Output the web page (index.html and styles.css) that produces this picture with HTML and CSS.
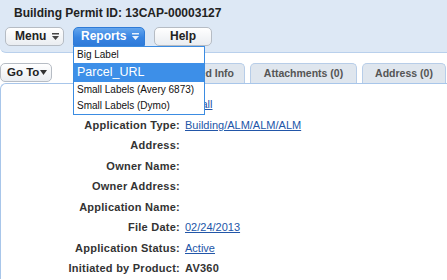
FILE: index.html
```html
<!DOCTYPE html>
<html lang="en">
<head>
  <meta charset="UTF-8" />
  <title>Building Permit 13CAP-00003127</title>
  <link rel="stylesheet" href="styles.css">
</head>
<body>
  <div class="header">
    <h1 class="title">Building Permit ID: 13CAP-00003127</h1>
    <div class="toolbar">
      <button class="btn btn-menu">Menu
        <svg class="menu-icon" width="7" height="7" viewBox="0 0 7 7"><rect width="7" height="1.5"/><path d="M0 3h7L3.5 7z"/></svg>
      </button>
      <div class="reports-wrap">
        <button class="btn btn-blue">Reports
          <svg class="menu-icon" width="7" height="7" viewBox="0 0 7 7"><rect width="7" height="1.5"/><path d="M0 3h7L3.5 7z"/></svg>
        </button>
        <ul class="dropdown">
          <li class="dd-item">Big Label</li>
          <li class="dd-item active">Parcel_URL</li>
          <li class="dd-item">Small Labels (Avery 6873)</li>
          <li class="dd-item">Small Labels (Dymo)</li>
        </ul>
      </div>
      <button class="btn btn-help">Help</button>
    </div>
  </div>

  <div class="nav">
    <button class="btn btn-goto">Go To
      <svg width="7" height="5" viewBox="0 0 7 5"><path d="M0 0h7L3.5 5z"/></svg>
    </button>
    <div class="tabs">
      <div class="tab">Details</div>
      <div class="tab">Extended Info</div>
      <div class="tab tab-attach">Attachments (0)</div>
      <div class="tab tab-address">Address (0)</div>
    </div>
  </div>

  <div class="content">
    <div class="label">Record Type:</div>
    <div class="value"><a href="#">Small</a></div>

    <div class="label">Application Type:</div>
    <div class="value"><a href="#">Building/ALM/ALM/ALM</a></div>

    <div class="label">Address:</div>
    <div class="value"></div>

    <div class="label">Owner Name:</div>
    <div class="value"></div>

    <div class="label">Owner Address:</div>
    <div class="value"></div>

    <div class="label">Application Name:</div>
    <div class="value"></div>

    <div class="label">File Date:</div>
    <div class="value"><a href="#">02/24/2013</a></div>

    <div class="label">Application Status:</div>
    <div class="value"><a href="#">Active</a></div>

    <div class="label">Initiated by Product:</div>
    <div class="value strong">AV360</div>
  </div>
</body>
</html>
```

FILE: styles.css
```css
body {
  margin: 0;
  font-family: "Liberation Sans", Arial, sans-serif;
  background-color: #fff;
  color: #222;
  width: 447px;
  height: 280px;
  overflow: hidden;
}

.header {
  background-color: #dde8f5;
  border-bottom: 1px solid #b9d0ec;
  border-bottom-left-radius: 6px;
  padding: 5px 5px 6px;
}

.title {
  margin: 0 0 6px 9px;
  font-size: 12px;
  font-weight: bold;
  line-height: 16px;
  color: #222;
}

.toolbar {
  display: flex;
  gap: 9px;
}

.btn {
  display: flex;
  align-items: center;
  gap: 6px;
  height: 19px;
  box-sizing: border-box;
  margin: 0;
  padding: 0 0 0 9px;
  border: 1px solid #b6bcc4;
  border-radius: 5px;
  background: linear-gradient(#fff, #eaedf1);
  font: bold 12px/17px "Liberation Sans", Arial, sans-serif;
  color: #222;
}

.btn-menu {
  width: 59px;
}

.menu-icon {
  fill: #444;
}

.btn-blue {
  width: 72px;
  padding-left: 7px;
  border-color: #2f7bd6;
  border-radius: 5px 5px 0 0;
  background: linear-gradient(#64a6ee, #3784e2 55%, #2f7bda);
  color: #fff;
}

.btn-blue .menu-icon {
  fill: #e8f1fc;
}

.btn-help {
  width: 58px;
  justify-content: center;
  padding: 0;
}

.reports-wrap {
  position: relative;
}

.dropdown {
  position: absolute;
  top: 19px;
  left: 0;
  width: 132px;
  box-sizing: border-box;
  margin: 0;
  padding: 0;
  list-style: none;
  background-color: #fff;
  border: 1px solid #3b8ce2;
  z-index: 5;
}

.dd-item {
  padding-left: 3px;
  font-size: 10px;
  line-height: 16px;
  color: #111;
  white-space: nowrap;
}

.dd-item.active {
  background-color: #3d8fe8;
  color: #fff;
  font-size: 12.5px;
  line-height: 19px;
}

.nav {
  display: flex;
  align-items: flex-end;
  margin-top: 10px;
  height: 20px;
}

.btn-goto {
  gap: 1px;
  align-self: flex-start;
  width: 52px;
  padding-left: 6px;
  font-size: 11.5px;
}

.btn-goto svg {
  fill: #333;
}

.tabs {
  display: flex;
  gap: 5px;
  margin-left: auto;
  margin-right: 1px;
}

.tab {
  height: 19px;
  padding: 0 10px;
  border: 1px solid #b7cde8;
  border-bottom: none;
  border-radius: 5px 5px 0 0;
  background-color: #dfe6ee;
  font-size: 10.5px;
  font-weight: bold;
  line-height: 19px;
  color: #555;
  text-align: center;
  white-space: nowrap;
}

.tab-attach {
  width: 85px;
}

.tab-address {
  width: 62px;
}

.content {
  display: grid;
  grid-template-columns: 179px 1fr;
  grid-auto-rows: 20.5px;
  column-gap: 5px;
  align-items: center;
  padding-top: 10px;
  border-top: 1px solid #a8c6ea;
  border-left: 1px solid #a8c6ea;
  border-top-left-radius: 6px;
  font-size: 11px;
}

.label {
  text-align: right;
  font-weight: bold;
  letter-spacing: 0.25px;
  color: #333;
}

.value a {
  color: #2256a8;
  text-decoration: underline;
}

.value.strong {
  font-weight: bold;
  letter-spacing: 0.25px;
  color: #333;
}
```
